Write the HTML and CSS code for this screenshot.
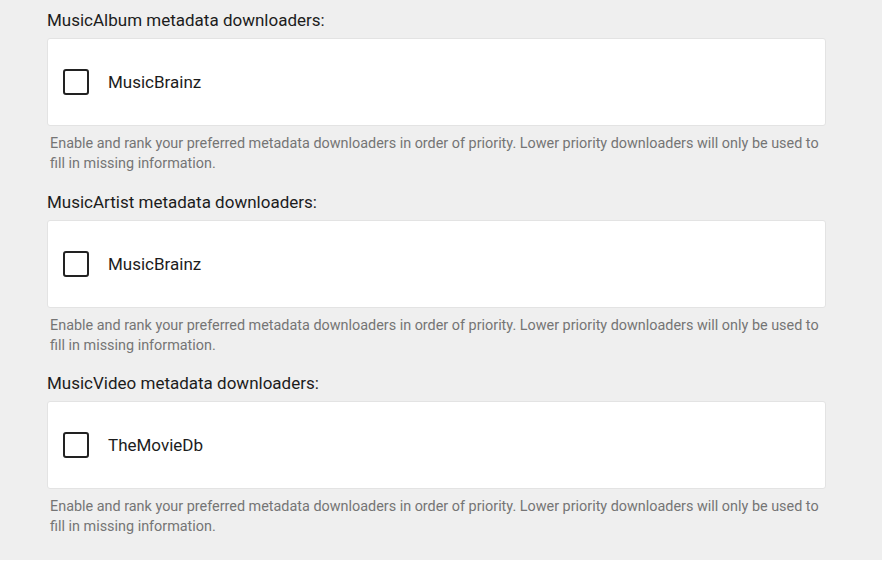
FILE: index.html
```html
<!DOCTYPE html>
<html>
<head>
<meta charset="utf-8">
<link rel="stylesheet" href="styles.css">
</head>
<body>
<div class="page">
  <section class="group">
    <h3 class="group-title">MusicAlbum metadata downloaders:</h3>
    <div class="card">
      <label class="option"><span class="checkbox"></span><span class="option-label">MusicBrainz</span></label>
    </div>
    <p class="desc">Enable and rank your preferred metadata downloaders in order of priority. Lower priority downloaders will only be used to fill in missing information.</p>
  </section>
  <section class="group">
    <h3 class="group-title">MusicArtist metadata downloaders:</h3>
    <div class="card">
      <label class="option"><span class="checkbox"></span><span class="option-label">MusicBrainz</span></label>
    </div>
    <p class="desc">Enable and rank your preferred metadata downloaders in order of priority. Lower priority downloaders will only be used to fill in missing information.</p>
  </section>
  <section class="group">
    <h3 class="group-title">MusicVideo metadata downloaders:</h3>
    <div class="card">
      <label class="option"><span class="checkbox"></span><span class="option-label">TheMovieDb</span></label>
    </div>
    <p class="desc">Enable and rank your preferred metadata downloaders in order of priority. Lower priority downloaders will only be used to fill in missing information.</p>
  </section>
</div>
</body>
</html>
```

FILE: styles.css
```css
html, body {
  margin: 0;
  padding: 0;
  background: #ffffff;
}
body {
  font-family: Roboto, "Liberation Sans", sans-serif;
}
.page {
  background: #efefef;
  height: 560px;
  box-sizing: border-box;
  padding: 8px 56px 0 47px;
  display: flex;
  flex-direction: column;
  gap: 15.5px;
}
.group {
  display: flex;
  flex-direction: column;
}
.group-title {
  margin: 0 0 6px 0;
  font-size: 17px;
  line-height: 24px;
  font-weight: 400;
  color: #1c1c1c;
}
.card {
  background: #ffffff;
  border: 1px solid #e3e3e3;
  border-radius: 3px;
  height: 88px;
  box-sizing: border-box;
  display: flex;
  align-items: center;
  padding-left: 15px;
}
.option {
  display: flex;
  align-items: center;
  gap: 19px;
}
.checkbox {
  width: 26px;
  height: 26px;
  box-sizing: border-box;
  border: 2px solid #222222;
  border-radius: 3px;
}
.option-label {
  font-size: 17px;
  color: #1c1c1c;
}
.desc {
  margin: 8px 0 0 0;
  padding-left: 3px;
  font-size: 14.4px;
  line-height: 20px;
  color: #757575;
}
```
